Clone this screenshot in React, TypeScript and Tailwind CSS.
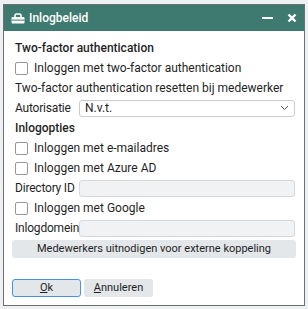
import type { ReactNode } from 'react';

function Checkbox({ label }: { label: string }) {
  return (
    <label className="flex h-[20px] items-center gap-[6px]">
      <span className="h-[13px] w-[13px] rounded-[2px] border border-[#969696] bg-white" />
      <span>{label}</span>
    </label>
  );
}

function Field({ label, children }: { label: string; children: ReactNode }) {
  return (
    <div className="flex h-[20px] items-center">
      <span className="w-[64px] shrink-0 tracking-[-0.2px]">{label}</span>
      {children}
    </div>
  );
}

function TextBox() {
  return <div className="h-[17px] flex-1 rounded-[3px] border border-[#d5d9dd] bg-[#f0f2f4]" />;
}

export default function App() {
  return (
    <div
      className="h-[309px] w-[308px] bg-[#eef1f3] pt-[4px] pl-[3px] text-[12px] text-[#1f1f1f]"
      style={{ fontFamily: 'Roboto, "Liberation Sans", sans-serif' }}
    >
      <div className="flex h-[302px] w-[302px] flex-col border border-[#6e6e6e] bg-white">
        {/* titelbalk */}
        <div className="flex h-[26px] shrink-0 items-center bg-[#3e7a6f] px-[7px] text-white">
          <svg width="14" height="11" viewBox="0 0 14 11" className="mr-[4px]">
            <path d="M4 4V2.5C4 1.5 4.8 1 5.6 1h2.8C9.2 1 10 1.5 10 2.5V4" fill="none" stroke="white" strokeWidth="1.6" />
            <rect x="0.5" y="4" width="13" height="6.5" rx="1" fill="white" />
            <rect x="0.5" y="6.6" width="13" height="1" fill="#3e7a6f" />
          </svg>
          <span className="font-medium">Inlogbeleid</span>
          <div className="ml-auto flex items-center gap-[14px]">
            <span className="block h-[2px] w-[11px] bg-white" />
            <svg width="10" height="10" viewBox="0 0 10 10">
              <path d="M1.5 1.5l7 7M8.5 1.5l-7 7" stroke="white" strokeWidth="2.4" />
            </svg>
          </div>
        </div>

        <div className="flex flex-1 flex-col px-[8px] pt-[8px]">
          <div className="flex flex-col pl-[3px] pr-[1px]">
            <div className="flex h-[17px] items-center font-medium">Two-factor authentication</div>
            <div className="mt-[2px]">
              <Checkbox label="Inloggen met two-factor authentication" />
            </div>
            <div className="flex h-[20px] items-center">Two-factor authentication resetten bij medewerker</div>
            <Field label="Autorisatie">
              <div className="flex h-[17px] flex-1 items-center justify-between rounded-[3px] border border-[#c9cdd1] bg-white pr-[5px] pl-[5px]">
                <span>N.v.t.</span>
                <svg width="9" height="6" viewBox="0 0 9 6">
                  <path d="M1 1l3.5 3.5L8 1" fill="none" stroke="#555" strokeWidth="1" />
                </svg>
              </div>
            </Field>
            <div className="flex h-[20px] items-center font-medium">Inlogopties</div>
            <Checkbox label="Inloggen met e-mailadres" />
            <Checkbox label="Inloggen met Azure AD" />
            <Field label="Directory ID">
              <TextBox />
            </Field>
            <Checkbox label="Inloggen met Google" />
            <Field label="Inlogdomein">
              <TextBox />
            </Field>
          </div>
          <button className="mt-[2px] flex h-[18px] items-center justify-center rounded-[3px] bg-[#e3e7ea] text-[11px]">
            Medewerkers uitnodigen voor externe koppeling
          </button>

          <div className="mt-[21px] flex gap-[3px] text-[11px]">
            <button className="flex h-[18px] w-[69px] items-center justify-center rounded-[3px] border border-[#4a90e2] bg-[#e3e7ea]">
              <span className="underline">O</span>k
            </button>
            <button className="flex h-[18px] w-[69px] items-center justify-center rounded-[3px] bg-[#e3e7ea]">
              <span className="underline">A</span>nnuleren
            </button>
          </div>
        </div>
      </div>
    </div>
  );
}
